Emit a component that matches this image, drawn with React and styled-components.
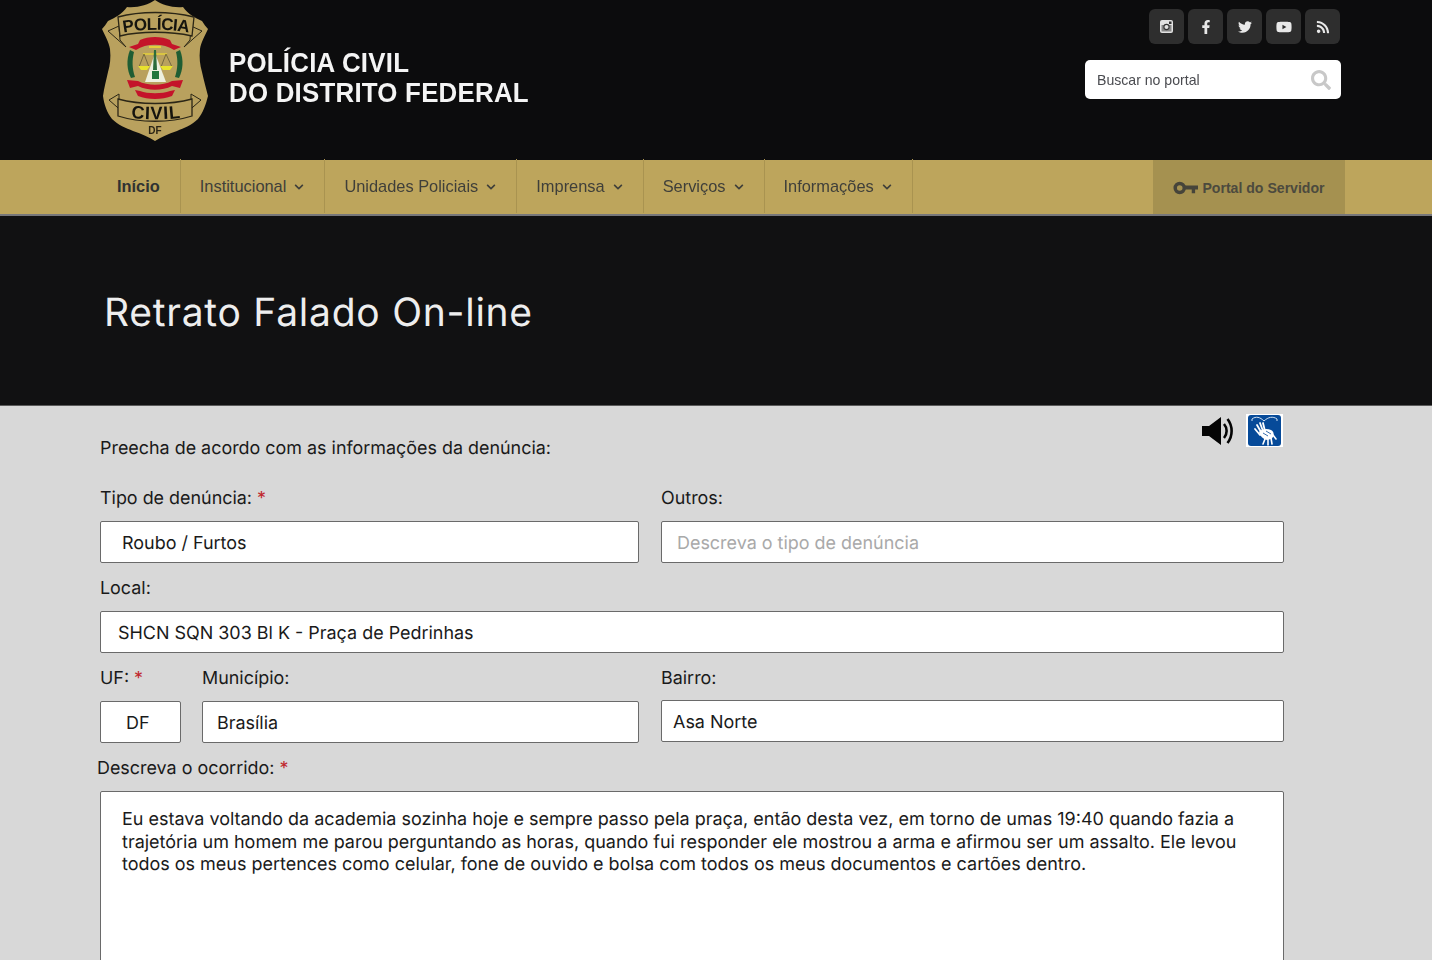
import React from 'react';
import styled, { createGlobalStyle } from 'styled-components';
import { FaFacebookF, FaTwitter, FaYoutube, FaRss, FaSearch, FaChevronDown } from 'react-icons/fa';

const Global = createGlobalStyle`
  html, body { margin: 0; padding: 0; background: #d8d8d8; }
  body { font-family: Inter, "Liberation Sans", sans-serif; height: 960px; overflow: hidden; }
  * { box-sizing: border-box; }
`;

const Header = styled.header`
  height: 160px; background: #0c0c0d; padding: 0 91px 0 102px;
  display: flex; justify-content: space-between; filter: blur(0.35px);
`;
const Brand = styled.div`display: flex; align-items: flex-start; gap: 19px;`;
const Wordmark = styled.div`
  margin-top: 48px; color: #f4f4f4; font: 700 27.5px/29.5px "Liberation Sans", sans-serif;
  letter-spacing: 0.25px; white-space: nowrap; transform: scaleX(0.94); transform-origin: left center;
`;
const Tools = styled.div`
  width: 257px; padding-top: 9px; display: flex; flex-direction: column; align-items: flex-end; gap: 16px;
`;
const Socials = styled.div`display: flex; gap: 4px; padding-right: 1px;`;
const Social = styled.a`
  width: 35px; height: 35px; border-radius: 6px; background: #2e2e2e; color: #e8e8e8;
  display: flex; align-items: center; justify-content: center; font-size: 14px;
`;
const Search = styled.div`
  width: 256px; height: 39px; background: #fff; border-radius: 5px; padding: 0 10px 0 12px;
  display: flex; align-items: center; justify-content: space-between;
  font: 14.1px "Liberation Sans", sans-serif; color: #4a4b50;
  svg { color: #c8c8c8; font-size: 20px; }
`;

const Nav = styled.nav`
  height: 56px; background: #bda55c; border-bottom: 2px solid #77777a; padding: 0 87px 0 97px;
  display: flex; justify-content: space-between; filter: blur(0.25px);
`;
const Menu = styled.div`display: flex;`;
const MenuItem = styled.a`
  height: 54px; padding: 0 20px 0 ${p => p.$first ? 20 : 19}px; display: flex; align-items: center; gap: 8px;
  border-right: 1px solid #a99350; color: ${p => p.$first ? '#2f3232' : '#3f3f3a'};
  font: ${p => p.$first ? 700 : 400} 16.4px "Liberation Sans", sans-serif; white-space: nowrap; margin-top: -1px;
  svg { font-size: 10px; margin-top: 1px; }
`;
const Portal = styled.a`
  width: 192px; height: 54px; background: #a59150; color: #4c4a3e; display: flex; align-items: center; justify-content: center; gap: 4px;
  font: 700 14.1px "Liberation Sans", sans-serif; padding-top: 1px;
`;

const Hero = styled.section`
  height: 190px; background: #111112; padding: 0 104px; display: flex; align-items: center;
  border-bottom: 1px solid #5a5a5a;
`;
const Title = styled.h1`
  margin: 3px 0 0; color: #eeeeee; font: 400 39px Inter, sans-serif; letter-spacing: 0.75px;
  text-rendering: geometricPrecision;
`;

const Main = styled.main`
  position: relative; background: #d8d8d8; padding: 31px 148px 0 100px; color: #1a1a1a;
  font-size: 17.92px; height: 555px; overflow: hidden; text-rendering: geometricPrecision;
`;
const A11y = styled.div`
  position: absolute; top: 8px; right: 149px; display: flex; align-items: center; gap: 13px;
`;
const Intro = styled.p`margin: 0 0 26px; line-height: 24px; height: 24px;`;
const Row = styled.div`
  display: grid; grid-template-columns: ${p => p.$cols}; column-gap: ${p => p.$gap || 22}px; margin-bottom: 14px;
`;
const Field = styled.div`display: flex; flex-direction: column; min-width: 0; margin-left: ${p => p.$inset || 0}px;`;
const Label = styled.label`
  line-height: 24px; height: 24px; margin-bottom: 10px;
  margin-left: ${p => p.$shift || 0}px;
`;
const Req = styled.span`color: #c0272d;`;
const Input = styled.div`
  height: 42px; border: 1px solid #6a6a6a; border-radius: 2px; background: #fff;
  padding: 2px 0 0 ${p => p.$pad || 15}px; display: flex; align-items: center;
  margin-top: ${p => p.$lift ? -1 : 0}px; font-size: 17.96px;
  color: ${p => p.$ph ? '#a9a9a9' : '#1a1a1a'};
`;
const TextArea = styled.div`
  height: 260px; border: 1px solid #6a6a6a; border-radius: 2px; background: #fff;
  padding: 17px 40px 0 21px; line-height: 22.5px; color: #1a1a1a; font-size: 17.98px;
`;

const gold = '#b9a15e';
const ink = '#2b2616';
const Badge = () => (
  <svg width="108" height="143" viewBox="0 0 108 143" aria-hidden="true">
    <path d="M53 0 C46 5 35 8 25 7 C20 14 13 18 6 21 C4 24 2 27 0 29 C3 36 7 42 8 49 C9 58 8 65 6 72 C4 81 2 88 1 96 C2 104 5 113 10 119 C16 125 24 128 31 131 C40 134 47 137 53 141 C59 137 66 134 75 131 C82 128 90 125 96 119 C101 113 104 104 106 96 C104 88 102 81 100 72 C98 65 97 58 98 49 C99 42 103 36 106 29 C104 27 102 24 100 21 C93 18 86 14 81 7 C71 8 60 5 53 0Z" fill={gold}/>
    <path d="M6 31 L17 26 L18 40 L24 47 Z M100 31 L89 26 L88 40 L82 47 Z" fill={gold} stroke={ink} strokeWidth="1"/>
    <path d="M16 17 C38 11 68 11 92 17 L90 36 C68 31 38 31 18 36 Z" fill={gold} stroke={ink} strokeWidth="1.3"/>
    <path d="M7 100 L17 94 L17 108 L23 114 Z M99 100 L89 94 L89 108 L83 114 Z" fill={gold} stroke={ink} strokeWidth="1"/>
    <path d="M16 99 C38 105 68 105 90 99 L90 116 C68 123 38 123 16 116 Z" fill={gold} stroke={ink} strokeWidth="1.3"/>
    <path id="bt" d="M22 32.5 C38 29 68 29 86 32.5" fill="none"/>
    <text fontFamily="Liberation Sans, sans-serif" fontWeight="700" fontSize="17" fill="#15140e" letterSpacing="-0.6">
      <textPath href="#bt" startOffset="50%" textAnchor="middle">POLÍCIA</textPath>
    </text>
    <path id="bc" d="M24 117 C40 120 66 120 84 117" fill="none"/>
    <text fontFamily="Liberation Sans, sans-serif" fontWeight="700" fontSize="18" fill="#15140e" letterSpacing="0.8">
      <textPath href="#bc" startOffset="50%" textAnchor="middle">CIVIL</textPath>
    </text>
    <text x="53" y="134" textAnchor="middle" fontFamily="Liberation Sans, sans-serif" fontWeight="700" fontSize="10" fill="#2a2415">DF</text>
    <path d="M28 50 C24 60 25 70 29 78 L33 77 C30 68 30 60 32 52 Z M78 50 C82 60 81 70 77 78 L73 77 C76 68 76 60 74 52 Z" fill="#1f5d33"/>
    <path d="M27 47 L36 44 L38 40 C46 36 60 36 68 40 L70 44 L79 47 L72 50 C62 43 44 43 34 50 Z" fill="#c4142a"/>
    <path d="M25 80 L36 81 C46 86 60 86 70 81 L81 80 L78 88 L70 86 C60 91 46 91 36 86 L28 88 Z" fill="#c4142a"/>
    <path d="M33 90 L38 91 C46 94 60 94 68 91 L73 90 L70 96 C60 100 46 100 36 96 Z" fill="#c4142a"/>
    <path d="M41 54 H65" stroke="#e3cf3c" strokeWidth="1.6"/>
    <path d="M47 47 H59" stroke="#e3cf3c" strokeWidth="2"/>
    <path d="M42 54 L37 67 M42 54 L47 67 M64 54 L59 67 M64 54 L70 67" stroke="#4a442b" strokeWidth=".6"/>
    <path d="M36 66 H48 L45 70 H39 Z M58 66 H71 L68 70 H61 Z" fill="#e8e22e"/>
    <path d="M53 53 L64 82 H43 Z" fill="#eef0df"/>
    <rect x="50" y="71" width="7" height="8" fill="#23763a"/>
    <path d="M52 50 L54 50 L55 70 H51 Z" fill="#2c6c3c"/>
  </svg>
);

const Instagram = () => (
  <svg width="13" height="13" viewBox="0 0 13 13" aria-hidden="true">
    <rect width="13" height="13" rx="2" fill="#e2e2e2"/>
    <rect x="1.5" y="5" width="10" height="6.5" fill="#3a3a3a" opacity=".55"/>
    <circle cx="6.5" cy="7" r="2.6" fill="#e2e2e2" stroke="#333" strokeWidth="1.1"/>
    <rect x="9" y="1.5" width="2.5" height="2.5" fill="#333"/>
  </svg>
);

const Key = () => (
  <svg width="25" height="14" viewBox="0 0 26 14" aria-hidden="true">
    <circle cx="7" cy="7" r="4.7" fill="none" stroke="#46443a" strokeWidth="3.6"/>
    <path d="M12 4.5 H26 V8.5 H23 V12.5 H19.5 V8.5 H12 Z" fill="#46443a"/>
  </svg>
);

const Speaker = () => (
  <svg width="31" height="28" viewBox="0 0 31 28" aria-hidden="true">
    <path d="M0 9 H7 L19 0 V28 L7 19 H0 Z" fill="#050505"/>
    <path d="M22 7 C25.5 11 25.5 17 22 21" fill="none" stroke="#050505" strokeWidth="2.6"/>
    <path d="M25.5 2 C31 9 31 19 25.5 26" fill="none" stroke="#050505" strokeWidth="2.6"/>
  </svg>
);

const Hands = () => (
  <svg width="37" height="33" viewBox="0 0 37 33" aria-hidden="true">
    <rect width="37" height="33" fill="#fff"/>
    <rect x="2" y="1" width="33" height="31" rx="3" fill="#064a99"/>
    <path d="M6 5 C10 2 14 3 18 7 C22 3 27 2 31 5 M6 5 V7 M31 5 V7" fill="none" stroke="#cfe0f2" strokeWidth="1"/>
    <path d="M11 11 L15 18 M14 9 L17 17 M17 9 L19 17 M9 15 L14 21" stroke="#fff" strokeWidth="1.8" strokeLinecap="round"/>
    <path d="M13 18 C15 15 21 14 25 16 C29 18 28 23 25 25 L21 26 C17 25 14 22 13 18Z" fill="#fff"/>
    <path d="M19 25 L17 30 M22 25 L22 31 M25 24 L26 30 M27 21 L30 25" stroke="#fff" strokeWidth="1.6" strokeLinecap="round"/>
    <path d="M17 19 L22 22 M20 17 L25 20" stroke="#064a99" strokeWidth=".8"/>
  </svg>
);

const items = ['Institucional', 'Unidades Policiais', 'Imprensa', 'Serviços', 'Informações'];

export default function App() {
  return (
    <>
      <Global />
      <Header>
        <Brand>
          <Badge />
          <Wordmark>POLÍCIA CIVIL<br />DO DISTRITO FEDERAL</Wordmark>
        </Brand>
        <Tools>
          <Socials>
            <Social><Instagram /></Social>
            <Social><FaFacebookF /></Social>
            <Social><FaTwitter /></Social>
            <Social><FaYoutube style={{ fontSize: 16 }} /></Social>
            <Social><FaRss /></Social>
          </Socials>
          <Search>Buscar no portal<FaSearch /></Search>
        </Tools>
      </Header>
      <Nav>
        <Menu>
          <MenuItem $first>Início</MenuItem>
          {items.map(i => <MenuItem key={i}>{i}<FaChevronDown /></MenuItem>)}
        </Menu>
        <Portal><Key />Portal do Servidor</Portal>
      </Nav>
      <Hero><Title>Retrato Falado On-line</Title></Hero>
      <Main>
        <A11y><Speaker /><Hands /></A11y>
        <Intro>Preecha de acordo com as informações da denúncia:</Intro>
        <Row $cols="539px 623px">
          <Field><Label>Tipo de denúncia: <Req>*</Req></Label><Input $pad={21}>Roubo / Furtos</Input></Field>
          <Field><Label>Outros:</Label><Input $ph>Descreva o tipo de denúncia</Input></Field>
        </Row>
        <Row $cols="1184px">
          <Field><Label>Local:</Label><Input $pad={17}>SHCN SQN 303 Bl K - Praça de Pedrinhas</Input></Field>
        </Row>
        <Row $cols="81px 437px 624px" $gap={21}>
          <Field><Label>UF: <Req>*</Req></Label><Input $pad={25}>DF</Input></Field>
          <Field><Label>Município:</Label><Input $pad={14}>Brasília</Input></Field>
          <Field $inset={1}><Label>Bairro:</Label><Input $pad={11} $lift>Asa Norte</Input></Field>
        </Row>
        <Field>
          <Label $shift={-3}>Descreva o ocorrido: <Req>*</Req></Label>
          <TextArea>Eu estava voltando da academia sozinha hoje e sempre passo pela praça, então desta vez, em torno de umas 19:40 quando fazia a trajetória um homem me parou perguntando as horas, quando fui responder ele mostrou a arma e afirmou ser um assalto. Ele levou todos os meus pertences como celular, fone de ouvido e bolsa com todos os meus documentos e cartões dentro.</TextArea>
        </Field>
      </Main>
    </>
  );
}
